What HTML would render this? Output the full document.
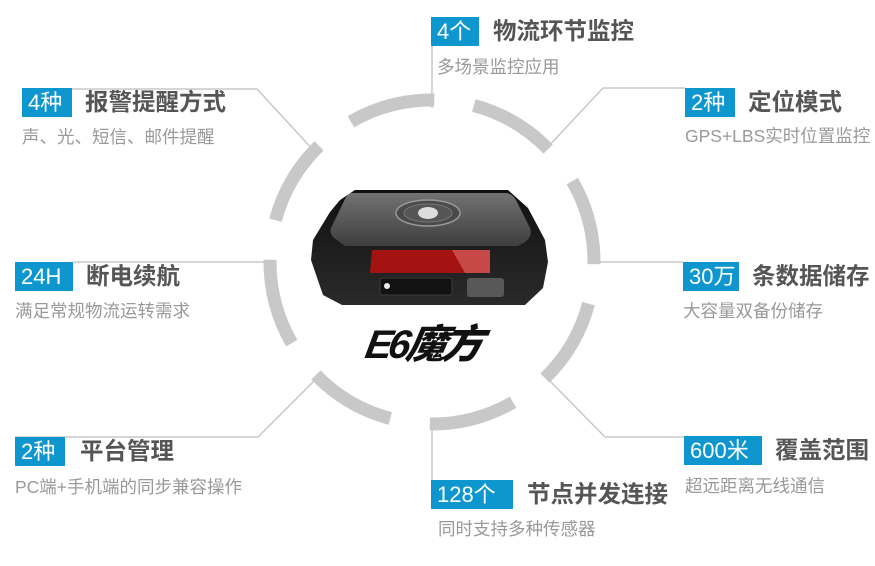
<!DOCTYPE html>
<html><head><meta charset="utf-8"><style>
body{margin:0;width:875px;height:566px;background:#fff;position:relative;overflow:hidden;font-family:"Liberation Sans","Noto Sans CJK SC",sans-serif}
.b{position:absolute;background:#0e97cf;color:#fff;font-size:22px;line-height:29px;height:29px;padding:0 0 0 6px;box-sizing:border-box;white-space:nowrap;overflow:hidden}
.t{position:absolute;color:#555;font-size:23.5px;font-weight:bold;line-height:29px;white-space:nowrap}
.s{position:absolute;color:#999;font-size:17.5px;line-height:20px;white-space:nowrap}
svg{position:absolute;left:0;top:0}
</style></head><body>
<svg width="875" height="566">
<circle cx="432" cy="262" r="162" fill="none" stroke="#c8c8c8" stroke-width="13" stroke-dasharray="87.2 40" stroke-dashoffset="85"/>
<g fill="none" stroke="#c8c8c8" stroke-width="1.5">
<polyline points="72,89 257,89 315,152"/>
<polyline points="432,46 432,108"/>
<polyline points="685,88 603,88 545,150"/>
<polyline points="73,262 268,262"/>
<polyline points="598,262 683,262"/>
<polyline points="15,437 258,437 318,377"/>
<polyline points="432,425 432,480"/>
<polyline points="547,378 605,437 684,437"/>
</g>
<defs>
<linearGradient id="tp" x1="0" y1="0" x2="0" y2="1"><stop offset="0" stop-color="#737373"/><stop offset="1" stop-color="#3e3e3e"/></linearGradient>
<linearGradient id="bd" x1="0" y1="0" x2="0" y2="1"><stop offset="0" stop-color="#111"/><stop offset="1" stop-color="#2a2a2a"/></linearGradient>
</defs>
<path d="M340,200 L355,190 L508,190 L528,208 L545,240 L548,262 L543,288 L525,305 L342,305 L323,295 L311,260 L313,240 L330,212 Z" fill="url(#bd)"/>
<path d="M352,193 L505,193 Q512,193 516,200 L530,228 Q533,236 525,242 L518,246 L345,246 L334,238 Q328,232 332,226 L345,199 Q348,193 352,193 Z" fill="url(#tp)"/>
<polygon points="372,250 490,250 490,273 370,273" fill="#a51212"/>
<polygon points="452,250 490,250 490,273 465,273" fill="#c84848"/>
<rect x="380" y="278" width="72" height="17" rx="3" fill="#121212" stroke="#3a3a3a"/>
<circle cx="387" cy="286" r="3" fill="#eee"/>
<rect x="467" y="278" width="37" height="19" rx="3" fill="#585858"/>
<ellipse cx="428" cy="213" rx="32" ry="13" fill="#4a4a4a" stroke="#999" stroke-width="1.5"/>
<ellipse cx="428" cy="213" rx="24" ry="9" fill="#555" stroke="#777"/>
<ellipse cx="428" cy="213" rx="10" ry="6" fill="#ddd"/>
</svg>
<div style="position:absolute;left:366px;top:322px;font-size:40px;line-height:46px;font-weight:900;font-style:italic;color:#111;letter-spacing:-4px;transform:skewX(-10deg)">E6魔方</div>

<div class="b" style="left:22px;top:88px;width:50px">4种</div><div class="t" style="left:85px;top:88px">报警提醒方式</div><div class="s" style="left:22px;top:127px">声、光、短信、邮件提醒</div>
<div class="b" style="left:431px;top:17px;width:48px">4个</div><div class="t" style="left:493px;top:17px">物流环节监控</div><div class="s" style="left:437px;top:57px">多场景监控应用</div>
<div class="b" style="left:685px;top:88px;width:50px">2种</div><div class="t" style="left:748px;top:88px">定位模式</div><div class="s" style="left:685px;top:126px">GPS+LBS实时位置监控</div>
<div class="b" style="left:15px;top:262px;width:58px">24H</div><div class="t" style="left:86px;top:262px">断电续航</div><div class="s" style="left:15px;top:301px">满足常规物流运转需求</div>
<div class="b" style="left:683px;top:262px;width:56px">30万</div><div class="t" style="left:752px;top:262px">条数据储存</div><div class="s" style="left:683px;top:301px">大容量双备份储存</div>
<div class="b" style="left:15px;top:437px;width:50px">2种</div><div class="t" style="left:80px;top:437px">平台管理</div><div class="s" style="left:15px;top:477px">PC端+手机端的同步兼容操作</div>
<div class="b" style="left:684px;top:436px;width:78px">600米</div><div class="t" style="left:775px;top:436px">覆盖范围</div><div class="s" style="left:685px;top:476px">超远距离无线通信</div>
<div class="b" style="left:431px;top:480px;width:82px">128个</div><div class="t" style="left:527px;top:480px">节点并发连接</div><div class="s" style="left:438px;top:519px">同时支持多种传感器</div>
</body></html>
